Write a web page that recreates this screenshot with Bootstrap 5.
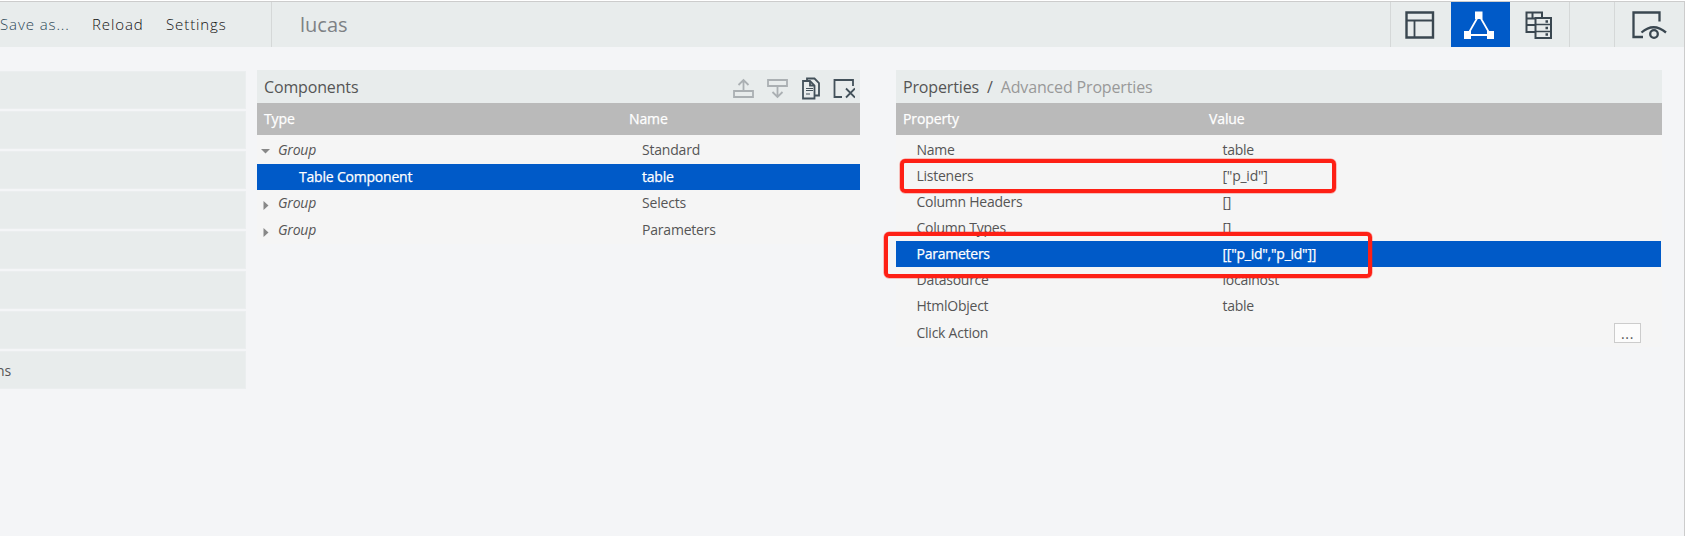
<!DOCTYPE html>
<html lang="en">
<head>
<meta charset="utf-8">
<title>Dashboard editor - lucas</title>
<link href="https://cdn.jsdelivr.net/npm/bootstrap@5.3.0/dist/css/bootstrap.min.css" rel="stylesheet">
<style>
body{background:#fff;font-family:"Open Sans",sans-serif;font-size:14px;color:#555;height:536px;overflow:hidden}
.editor{width:1685px;height:535px;margin-top:1px;background:#f4f5f7;border-top:1px solid #ccc;border-right:1px solid #ccc}
.topbar{height:45px;background:#e8ecec;padding:0}
.menu{width:272px;border-right:1px solid #d5d8d8;font-weight:300;font-size:15px;color:#111;letter-spacing:.9px}
.menu a{color:inherit;text-decoration:none;white-space:nowrap}
.menu a:first-child{width:92px;color:#2b4654}
.menu a:nth-child(2){width:74px}
.dash-name{font-size:20px;color:#7d8184;padding-left:28px}
.tool{border-left:1px solid #d5d8d8;height:45px}
.tool.active{background:#005ac8;border:0}
.side{width:246px;padding-top:24px}
.side-item{height:38px;margin-bottom:2px;background:#e8ecec;border:1px solid #ebeeef;border-left:0;font-size:14px;line-height:38px;white-space:nowrap;overflow:hidden}
.side-text{display:inline-block;margin-left:-4px}
.panel{background:#f5f5f5;position:relative}
.panel-title{height:33px;background:#e8ecec;font-size:16px;letter-spacing:-.15px;padding:0 5px 0 7px}
.thead-bar{height:32px;background:#bababa;color:#fff;letter-spacing:-.1px;-webkit-text-stroke:.25px #fff;padding-bottom:2px;margin-bottom:2px}
.prop-row{height:26px;letter-spacing:-.25px;padding-bottom:2px}
.prop-row.sel{background:#005ac8;color:#fff;-webkit-text-stroke:.25px #fff}
.components{width:603px;margin-left:11px;margin-top:23px;height:174px}
.components .c1{width:372px;padding-left:7px}
.components .r27{height:27px}
.components .row-name{padding-left:13px}
.components .prop-row{letter-spacing:-.2px}
.properties{width:766px;margin-left:36px;margin-top:23px;height:277px}
.properties .c1{width:313px;padding-left:7px}
.properties .prop-row .c1{width:326.500px;padding-left:20.500px}
.properties .prop-row.sel{margin-right:1px}
.arrow{width:13px}
.arrow svg{position:relative;top:1px}
.more{width:27px;height:20px;border:1px solid #ccc;background:#fcfcfc;margin-right:21px;margin-top:2px;line-height:20px;letter-spacing:.6px}
.mark-box{position:absolute;border:4px solid #fe2015;border-radius:5px;box-shadow:0 0 0 .5px #fe201580}
.mark-a{left:4px;top:89px;width:436px;height:34px}
.mark-b{left:-12px;top:162px;width:488px;height:46px}
svg{display:block}
</style>
</head>
<body>
<div class="editor">
  <nav class="topbar navbar d-flex flex-nowrap align-items-stretch justify-content-start">
    <div class="menu d-flex align-items-center flex-shrink-0"><a href="#">Save as...</a><a href="#">Reload</a><a href="#">Settings</a></div>
    <div class="dash-name d-flex align-items-center flex-grow-1">lucas</div>
    <div class="tool" style="width:61px"><svg width="60" height="45" fill="none" stroke="#3a4750" stroke-width="2.400"><path d="M15.500 10.500h26.500v25H15.500z"/><path stroke-width="1.800" d="M15 18.500h27M23.500 18.500v17"/></svg></div>
    <div class="tool active" style="width:59px"><svg width="59" height="45" fill="none" stroke="#fff" stroke-width="1.800"><path d="M28 13L16.500 33h23z"/><path fill="#fff" stroke="none" d="M24 9.500h7.500v7.500H24zM13 29h7v8h-7zM36 29h7v8h-7z"/></svg></div>
    <div class="tool" style="width:59px;border:0"><svg width="59" height="45" fill="none" stroke="#3a4750" stroke-width="2"><path d="M25 30h-8.500V10.500h15.500v6M16.500 16.500h9M16.500 23h9M22.500 11v5"/><path d="M25.500 16h15.500v20H25.500z"/><path stroke-width="1.600" d="M26 22.500h15M26 29.500h15"/><path stroke-width="2.300" d="M35.500 19.500h2.500M35.500 26h2.500M35.500 32.500h2.500"/></svg></div>
    <div class="tool" style="width:45px"></div>
    <div class="tool" style="width:70px"><svg width="69" height="45" fill="none" stroke="#3a4750" stroke-width="2.300"><path d="M28 35h-9.500V10.500h26v9"/><path d="M26.500 30.500q12-10.500 24.500 0"/><circle cx="39" cy="32" r="3.800"/></svg></div>
  </nav>
  <div class="d-flex align-items-start">
    <div class="side">
      <div class="side-item"></div><div class="side-item"></div><div class="side-item"></div><div class="side-item"></div>
      <div class="side-item"></div><div class="side-item"></div><div class="side-item"></div><div class="side-item"><span class="side-text">ns</span></div>
    </div>
    <section class="panel components">
      <div class="panel-title d-flex align-items-center justify-content-between"><span>Components</span>
        <svg width="123" height="33" fill="none" stroke-width="1.800"><g stroke="#abb0b3"><path d="M2 21h19v6H2zM11.500 21V10M6.500 15l5-5 5 5"/><path d="M36 10h19v6H36zM45.500 16v11M40.500 22l5 5 5-5"/></g><g stroke="#43515a"><path d="M71 11h7l4.500 4.500V28.500H71z"/><path d="M75 11V8.500h7.500l4.500 4.500V25.500h-4M78 11.500v4h4"/><path stroke-width="1.200" d="M74 18.500h7M74 20.500h7M74 24h4"/><path d="M110 27h-7.500V10h18.500v6"/><path d="M114 18.500l9 9M123 18.500l-9 9"/></g></svg>
      </div>
      <div class="thead-bar d-flex align-items-center"><div class="c1">Type</div><div>Name</div></div>
      <div class="prop-row r27 d-flex align-items-center"><div class="c1 d-flex align-items-center ps-1"><span class="arrow me-1"><svg width="12" height="12" fill="#888"><path d="M0 4h9L4.500 8.500z"/></svg></span><em>Group</em></div><div class="row-name">Standard</div></div>
      <div class="prop-row sel d-flex align-items-center"><div class="c1"><span style="padding-left:35px">Table Component</span></div><div class="row-name">table</div></div>
      <div class="prop-row r27 d-flex align-items-center"><div class="c1 d-flex align-items-center ps-1"><span class="arrow me-1"><svg width="12" height="12" fill="#888"><path d="M2.500 3v9L7.500 7.500z"/></svg></span><em>Group</em></div><div class="row-name">Selects</div></div>
      <div class="prop-row r27 d-flex align-items-center"><div class="c1 d-flex align-items-center ps-1"><span class="arrow me-1"><svg width="12" height="12" fill="#888"><path d="M2.500 3v9L7.500 7.500z"/></svg></span><em>Group</em></div><div class="row-name">Parameters</div></div>
    </section>
    <section class="panel properties">
      <div class="panel-title d-flex align-items-center"><span>Properties</span><span class="mx-2">/</span><span style="color:#999">Advanced Properties</span></div>
      <div class="thead-bar d-flex align-items-center"><div class="c1">Property</div><div>Value</div></div>
      <div class="prop-row d-flex align-items-center"><div class="c1">Name</div><div>table</div></div>
      <div class="prop-row d-flex align-items-center"><div class="c1">Listeners</div><div>["p_id"]</div></div>
      <div class="prop-row d-flex align-items-center"><div class="c1">Column Headers</div><div>[]</div></div>
      <div class="prop-row d-flex align-items-center"><div class="c1">Column Types</div><div>[]</div></div>
      <div class="prop-row sel d-flex align-items-center"><div class="c1">Parameters</div><div>[["p_id","p_id"]]</div></div>
      <div class="prop-row d-flex align-items-center"><div class="c1">Datasource</div><div>localhost</div></div>
      <div class="prop-row d-flex align-items-center"><div class="c1">HtmlObject</div><div>table</div></div>
      <div class="prop-row d-flex align-items-center" style="height:28px"><div class="c1">Click Action</div><div class="more text-center ms-auto">...</div></div>
      <div class="mark-box mark-a"></div>
      <div class="mark-box mark-b"></div>
    </section>
  </div>
</div>
<script src="https://cdn.jsdelivr.net/npm/bootstrap@5.3.0/dist/js/bootstrap.bundle.min.js"></script>
</body>
</html>
